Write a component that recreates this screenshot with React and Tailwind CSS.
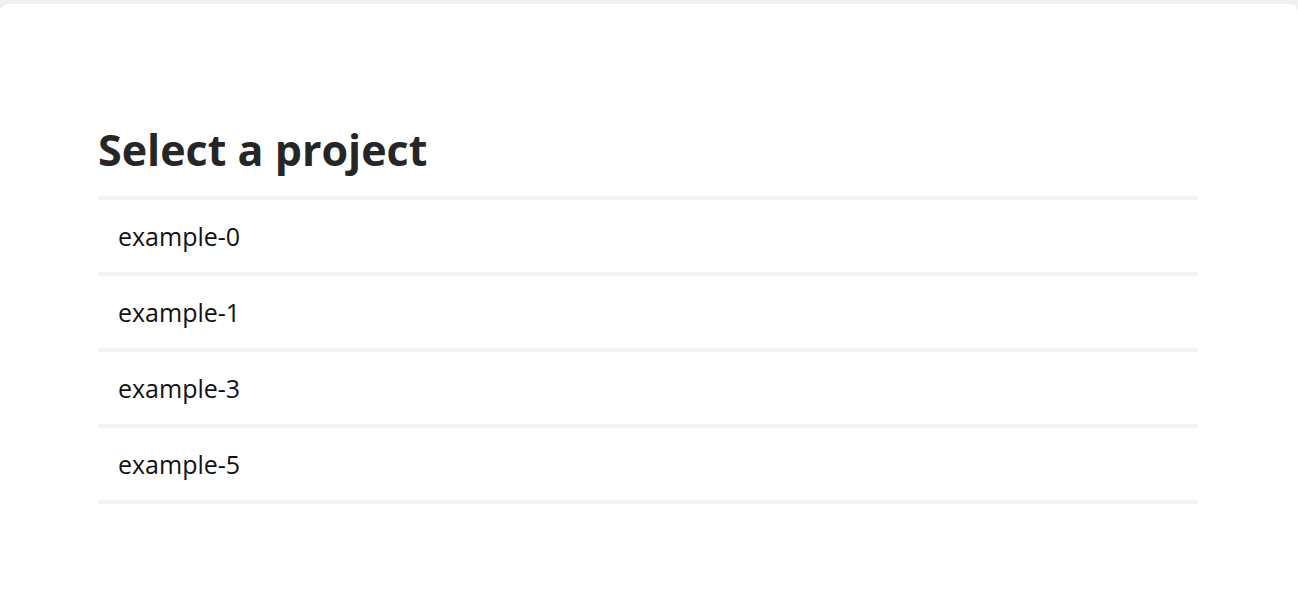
const projects = ['example-0', 'example-1', 'example-3', 'example-5'];

export default function App() {
  return (
    <div className="min-h-screen bg-[#f0f0f0] pt-[4px]" style={{ fontFamily: '"Open Sans", "Noto Sans", sans-serif' }}>
      <div className="min-h-[600px] rounded-t-[8px] bg-white pt-[118px]">
        <div className="ml-[98px] w-[1100px]">
          <h1 className="mb-[18px] text-[43px] font-bold leading-[56px] text-[#262626]">Select a project</h1>
          <ul className="border-t-4 border-[#f3f3f3]">
            {projects.map((name) => (
              <li key={name} className="flex h-[76px] items-center border-b-4 border-[#f3f3f3] px-5 pt-[2px] text-[25px] text-[#111]">
                {name}
              </li>
            ))}
          </ul>
        </div>
      </div>
    </div>
  );
}
